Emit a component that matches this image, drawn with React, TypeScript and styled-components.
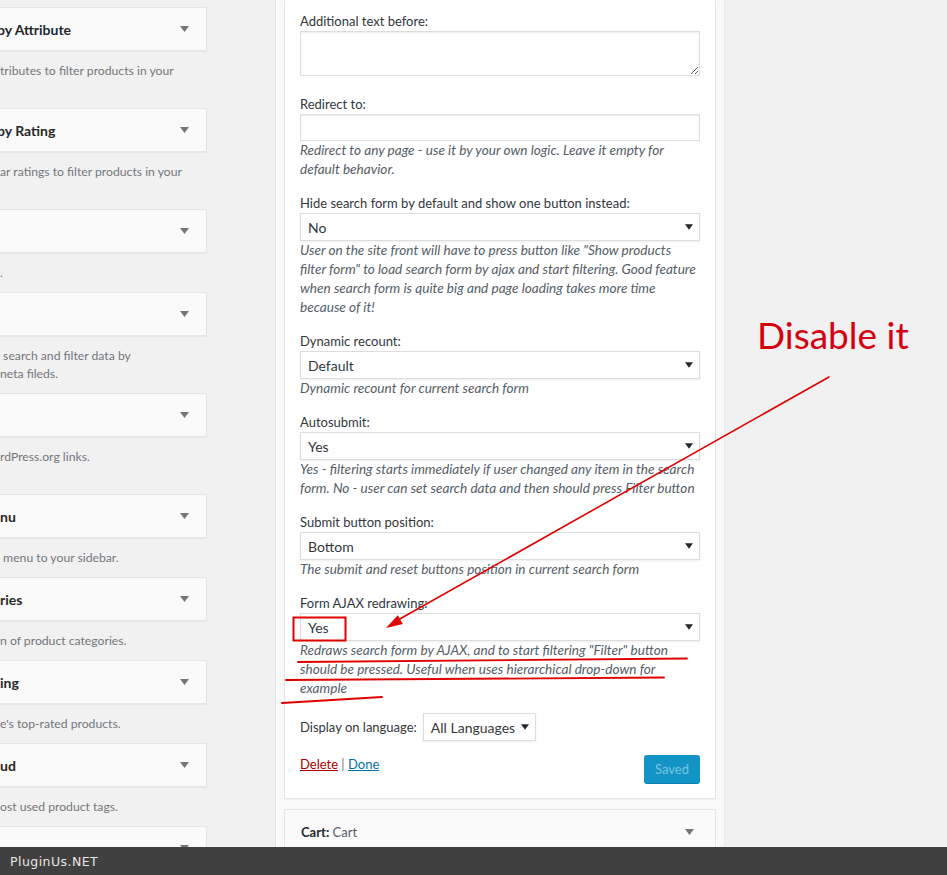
import React from 'react';
import styled, { createGlobalStyle } from 'styled-components';

const GlobalStyle = createGlobalStyle`
  * {
    box-sizing: border-box;
  }
  html, body {
    margin: 0;
    padding: 0;
    height: 875px;
    overflow: hidden;
    background: #f1f1f1;
    font-family: 'Lato', 'Liberation Sans', sans-serif;
    color: #32373c;
  }
`;

const Page = styled.div`
  position: relative;
  display: flex;
  align-items: flex-start;
  height: 875px;
  overflow: hidden;
`;

const LeftColumn = styled.div`
  width: 207px;
  flex-shrink: 0;
  padding-top: 7px;
`;

const Card = styled.div`
  height: 44px;
  display: flex;
  align-items: center;
  justify-content: space-between;
  padding-right: 17px;
  background: #fafafa;
  border: 1px solid #e5e5e5;
  border-left: none;
  box-shadow: 0 1px 1px rgba(0, 0, 0, 0.04);
  overflow: hidden;
`;

const CardTitle = styled.span<{ $shift: number }>`
  font-size: 14px;
  font-weight: 700;
  color: #23282d;
  white-space: nowrap;
  margin-left: ${(p) => -p.$shift}px;
`;

const CardDesc = styled.div`
  margin: 11px 0 10px;
  font-size: 12.2px;
  line-height: 18px;
  color: #72777c;
  white-space: pre;
  overflow: hidden;
`;

const Caret = styled.svg`
  flex-shrink: 0;
  display: block;
`;

const Holder = styled.div`
  margin-left: 68px;
  width: 450px;
  flex-shrink: 0;
  padding: 0 8px;
  background: #f9f9f9;
  border-left: 1px solid #e2e2e2;
  border-right: 1px solid #eaeaea;
  min-height: 875px;
`;

const OpenWidget = styled.div`
  background: #fff;
  border: 1px solid #e5e5e5;
  border-top: none;
  padding: 12px 15px 15px;
  box-shadow: 0 1px 1px rgba(0, 0, 0, 0.04);
`;

const Field = styled.div<{ $gap?: number }>`
  margin-bottom: ${(p) => p.$gap ?? 15}px;
`;

const Label = styled.div`
  font-size: 13px;
  line-height: 19px;
  color: #32373c;
`;

const TextArea = styled.textarea`
  display: block;
  width: 100%;
  height: 45px;
  margin: 0;
  border: 1px solid #ddd;
  box-shadow: inset 0 1px 2px rgba(0, 0, 0, 0.07);
  background: #fff;
  font-family: inherit;
  outline: none;
`;

const TextInput = styled.input`
  display: block;
  width: 100%;
  height: 27px;
  margin: 0;
  border: 1px solid #ddd;
  box-shadow: inset 0 1px 2px rgba(0, 0, 0, 0.07);
  background: #fff;
  outline: none;
`;

const SelectBox = styled.div<{ $width?: number }>`
  display: flex;
  align-items: center;
  justify-content: space-between;
  width: ${(p) => (p.$width ? `${p.$width}px` : '100%')};
  height: 28px;
  padding: 0 6px 0 7px;
  border: 1px solid #ddd;
  box-shadow: 0 1px 2px rgba(0, 0, 0, 0.07);
  background: #fff;
  font-size: 14px;
  color: #32373c;
`;

const Desc = styled.div`
  font-size: 13.6px;
  line-height: 19px;
  font-style: italic;
  color: #555d66;
  white-space: nowrap;
`;

const InlineField = styled.div`
  display: flex;
  align-items: center;
  gap: 6px;
`;

const Actions = styled.div`
  display: flex;
  justify-content: space-between;
  align-items: flex-start;
  margin-top: 14px;
`;

const Links = styled.div`
  font-size: 13px;
  line-height: 19px;
  color: #72777c;
`;

const LinkText = styled.a<{ $danger?: boolean }>`
  color: ${(p) => (p.$danger ? '#a00' : '#0073aa')};
  text-decoration: underline;
  cursor: pointer;
`;

const SavedButton = styled.button`
  width: 56px;
  height: 28px;
  border: none;
  border-radius: 3px;
  background: #1394c6;
  box-shadow: 0 1px 0 #0b7bab;
  color: #7ec5e2;
  font-family: inherit;
  font-size: 13px;
  padding: 0;
`;

const ClosedWidget = styled.div`
  margin-top: 10px;
  height: 46px;
  display: flex;
  align-items: center;
  justify-content: space-between;
  padding: 0 21px 0 16px;
  background: #fafafa;
  border: 1px solid #e5e5e5;
  box-shadow: 0 1px 1px rgba(0, 0, 0, 0.04);
`;

const WidgetTitle = styled.div`
  font-size: 13px;
  color: #23282d;
  strong {
    font-weight: 700;
  }
  span {
    color: #555d66;
  }
`;

const Overlay = styled.svg`
  position: absolute;
  left: 0;
  top: 0;
  pointer-events: none;
`;

const Note = styled.div`
  position: absolute;
  left: 757px;
  top: 311px;
  font-family: 'Lato', 'Liberation Sans', sans-serif;
  font-size: 37px;
  line-height: 48px;
  color: #d4000f;
  white-space: nowrap;
`;

const Footer = styled.div`
  position: absolute;
  left: 0;
  right: 0;
  bottom: 0;
  height: 28px;
  display: flex;
  align-items: center;
  padding-left: 10px;
  background: #404040;
  color: #e6e6e6;
  font-family: 'DejaVu Sans', 'Liberation Sans', sans-serif;
  font-size: 12.5px;
  letter-spacing: 0.45px;
`;

const DownArrow = ({ color = '#72777c', w = 9, h = 6 }: { color?: string; w?: number; h?: number }) => (
  <Caret width={w} height={h} viewBox="0 0 9 6">
    <path d="M0 0 L9 0 L4.5 6 Z" fill={color} />
  </Caret>
);

interface SideCard {
  title: string;
  shift: number;
  lines: string[];
}

const sideCards: SideCard[] = [
  { title: 'by Attribute', shift: 3, lines: ['tributes to filter products in your', ' '] },
  { title: 'by Rating', shift: 3, lines: ['ar ratings to filter products in your', ' '] },
  { title: '', shift: 0, lines: ['.'] },
  { title: '', shift: 0, lines: [' search and filter data by', 'neta fileds.'] },
  { title: '', shift: 0, lines: ['rdPress.org links.', ' '] },
  { title: 'nu', shift: 0, lines: [' menu to your sidebar.'] },
  { title: 'ries', shift: 0, lines: ['n of product categories.'] },
  { title: 'ing', shift: 0, lines: ["e's top-rated products."] },
  { title: 'ud', shift: 0, lines: ['ost used product tags.'] },
  { title: '', shift: 0, lines: [' '] },
];

interface SelectField {
  label: string;
  value: string;
  desc: string[];
  gap?: number;
}

const selectFields: SelectField[] = [
  {
    label: 'Hide search form by default and show one button instead:',
    value: 'No',
    desc: [
      'User on the site front will have to press button like "Show products',
      'filter form" to load search form by ajax and start filtering. Good feature',
      'when search form is quite big and page loading takes more time',
      'because of it!',
    ],
  },
  {
    label: 'Dynamic recount:',
    value: 'Default',
    desc: ['Dynamic recount for current search form'],
  },
  {
    label: 'Autosubmit:',
    value: 'Yes',
    desc: [
      'Yes - filtering starts immediately if user changed any item in the search',
      'form. No - user can set search data and then should press Filter button',
    ],
  },
  {
    label: 'Submit button position:',
    value: 'Bottom',
    desc: ['The submit and reset buttons position in current search form'],
  },
  {
    label: 'Form AJAX redrawing:',
    value: 'Yes',
    desc: [
      'Redraws search form by AJAX, and to start filtering "Filter" button',
      'should be pressed. Useful when uses hierarchical drop-down for',
      'example',
    ],
  },
];

export default function App() {
  return (
    <>
      <GlobalStyle />
      <Page>
        <LeftColumn>
          {sideCards.map((card, i) => (
            <React.Fragment key={i}>
              <Card>
                <CardTitle $shift={card.shift}>{card.title}</CardTitle>
                <DownArrow />
              </Card>
              <CardDesc>
                {card.lines.map((line, j) => (
                  <div key={j}>{line}</div>
                ))}
              </CardDesc>
            </React.Fragment>
          ))}
        </LeftColumn>

        <Holder>
          <OpenWidget>
            <Field $gap={19}>
              <Label>Additional text before:</Label>
              <TextArea />
            </Field>
            <Field>
              <Label>Redirect to:</Label>
              <TextInput type="text" />
              <Desc>
                Redirect to any page - use it by your own logic. Leave it empty for
                <br />
                default behavior.
              </Desc>
            </Field>
            {selectFields.map((f) => (
              <Field key={f.label} $gap={f.gap}>
                <Label>{f.label}</Label>
                <SelectBox>
                  <span>{f.value}</span>
                  <DownArrow color="#23282d" w={8} h={6} />
                </SelectBox>
                <Desc>
                  {f.desc.map((line, j) => (
                    <div key={j}>{line}</div>
                  ))}
                </Desc>
              </Field>
            ))}
            <InlineField>
              <Label>Display on language:</Label>
              <SelectBox $width={113}>
                <span>All Languages</span>
                <DownArrow color="#23282d" w={8} h={6} />
              </SelectBox>
            </InlineField>
            <Actions>
              <Links>
                <LinkText $danger>Delete</LinkText> | <LinkText>Done</LinkText>
              </Links>
              <SavedButton disabled>Saved</SavedButton>
            </Actions>
          </OpenWidget>
          <ClosedWidget>
            <WidgetTitle>
              <strong>Cart:</strong> <span>Cart</span>
            </WidgetTitle>
            <DownArrow />
          </ClosedWidget>
        </Holder>

        <Overlay width={947} height={875} viewBox="0 0 947 875">
          <g stroke="#e00000" strokeWidth={1.6} fill="none" strokeLinecap="round">
            <line x1={829} y1={377} x2={398} y2={620} />
            <rect x={293.5} y={617.5} width={52} height={23} strokeWidth={2} />
            <line x1={298} y1={662} x2={687} y2={658.5} strokeWidth={1.8} />
            <line x1={286} y1={680} x2={664} y2={677.5} strokeWidth={1.8} />
            <line x1={282} y1={703} x2={382} y2={697} strokeWidth={1.8} />
          </g>
          <path d="M386 628 L402.8 624.1 L397.8 615.3 Z" fill="#e00000" />
        </Overlay>
        <Note>Disable it</Note>

        <Footer>PluginUs.NET</Footer>
      </Page>
    </>
  );
}
